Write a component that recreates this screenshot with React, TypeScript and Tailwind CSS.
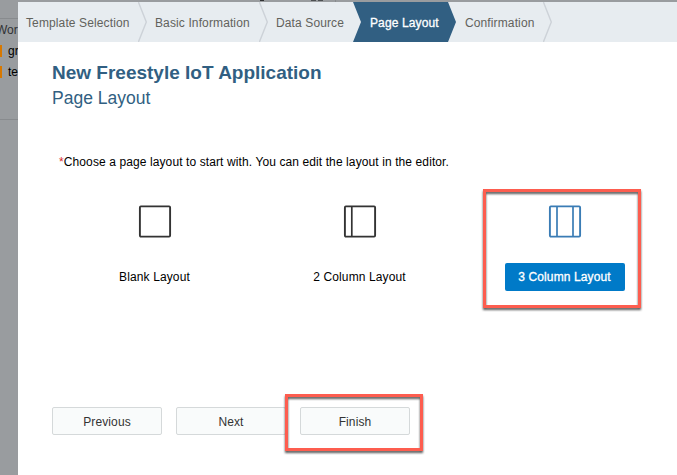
import React from "react";

function Chevron() {
  return (
    <svg width="10" height="40" viewBox="0 0 10 40" fill="none" className="shrink-0">
      <path d="M0.4 0L8.3 20L0.4 40" stroke="#cdd2d8" strokeWidth="1.4" />
    </svg>
  );
}

function Step({ label, className, last = true }: { label: string; className: string; last?: boolean }) {
  return (
    <div className={`flex h-10 shrink-0 items-center justify-between whitespace-nowrap ${className}`}>
      <span className="pt-px">{label}</span>
      {last && <Chevron />}
    </div>
  );
}

function LayoutIcon({ color, dividers }: { color: string; dividers: number[] }) {
  return (
    <svg width="34" height="34" viewBox="0 0 34 34" fill="none" stroke={color}>
      <rect x="1.9" y="1.4" width="30.2" height="30.2" rx="1" strokeWidth="1.9" />
      {dividers.map((x) => (
        <path key={x} d={`M${x} 1.5V31.5`} strokeWidth="1.7" />
      ))}
    </svg>
  );
}

function Option({ label, dividers, selected = false }: { label: string; dividers: number[]; selected?: boolean }) {
  return (
    <div className="relative flex w-[205px] flex-col items-center">
      <LayoutIcon color={selected ? "#3a7cb5" : "#333333"} dividers={dividers} />
      <div
        className={`mt-6 flex h-7 w-[120px] items-center justify-center whitespace-nowrap rounded-[2px] ${
          selected ? "bg-[#007ac8] text-white [-webkit-text-stroke:0.3px_white]" : "text-black"
        }`}
      >
        {label}
      </div>
      {selected && (
        <div className="absolute -top-[16px] left-[21px] h-[119px] w-[158px] border-[3px] border-[#fd5d4f] drop-shadow-[0_2px_1px_rgba(0,0,0,0.65)]" />
      )}
    </div>
  );
}

function Button({ label }: { label: string }) {
  return (
    <button className="h-7 w-[110px] rounded-[2px] border border-[#d5d9da] bg-[#f9fbfb] pt-px text-[#333333]">
      {label}
    </button>
  );
}

export default function App() {
  return (
    <div className="flex h-[475px] w-[677px] overflow-hidden bg-[#999c9f] font-['Liberation_Sans',Arial,sans-serif] text-[12px] leading-4">
      <aside className="h-full w-[18px] shrink-0 overflow-hidden text-black">
        <div className="mt-[18px] border-t border-[#888b8e] pt-[3px] text-[#303234]">
          <div className="-ml-[4px] whitespace-nowrap">Wor</div>
        </div>
        <div className="mt-[2px] flex h-[21px] items-center gap-[6px]">
          <i className="h-[12px] w-[2px] shrink-0 bg-[#d87800]" />
          <span className="whitespace-nowrap pt-px">gr</span>
        </div>
        <div className="flex h-[21px] items-center gap-[6px]">
          <i className="h-[12px] w-[2px] shrink-0 bg-[#d87800]" />
          <span className="whitespace-nowrap pt-px">te</span>
        </div>
        <div className="mt-[37px] border-t border-[#888b8e]" />
      </aside>
      <div className="flex grow flex-col">
        <div className="flex h-[2px] shrink-0 overflow-hidden">
          <i className="ml-[242px] h-px w-[4px] bg-[#303234]" />
          <i className="ml-[47px] h-px w-[5px] bg-[#4d5052]" />
          <i className="ml-[2px] h-px w-[5px] bg-[#4d5052]" />
          <i className="ml-[12px] h-full w-px bg-[#888b8e]" />
        </div>
        <main className="grow bg-white">
          <nav className="flex h-10 bg-[#e7ecf0] text-[12px] tracking-[0.12px] text-[#62625c]">
            <Step label="Template Selection" className="w-[130px] pl-2" />
            <Step label="Basic Information" className="w-[121px] pl-[7px]" />
            <Step label="Data Source" className="w-[84px] pl-[7px]" last={false} />
            <Step
              label="Page Layout"
              className="w-[104px] bg-[#315f82] pl-[17px] text-white [-webkit-text-stroke:0.3px_white] [clip-path:polygon(0_0,95px_0,103px_50%,95px_100%,0_100%,8px_50%)]"
              last={false}
            />
            <Step label="Confirmation" className="w-[96px] pl-2" />
          </nav>
          <div className="pl-[34px] pt-[19px] text-[#315f82]">
            <h1 className="text-[19px] font-bold leading-6">New Freestyle IoT Application</h1>
            <h2 className="text-[17.5px] leading-[26px]">Page Layout</h2>
          </div>
          <p className="mt-[43px] pl-[41px] tracking-[0.103px] text-black">
            <span className="text-[#d92b2b]">*</span>Choose a page layout to start with. You can edit the layout in the editor.
          </p>
          <section className="mt-[35px] flex pl-[34px] tracking-[0.12px]">
            <Option label="Blank Layout" dividers={[]} />
            <Option label="2 Column Layout" dividers={[8.8]} />
            <Option label="3 Column Layout" dividers={[9, 25]} selected />
          </section>
          <footer className="relative mt-[116px] flex gap-[14px] pl-[34px] tracking-[0.12px]">
            <Button label="Previous" />
            <Button label="Next" />
            <Button label="Finish" />
            <div className="absolute -top-[13px] left-[267px] h-[57px] w-[138px] border-[3px] border-[#fd5d4f] drop-shadow-[0_2px_1px_rgba(0,0,0,0.65)]" />
          </footer>
        </main>
      </div>
    </div>
  );
}
